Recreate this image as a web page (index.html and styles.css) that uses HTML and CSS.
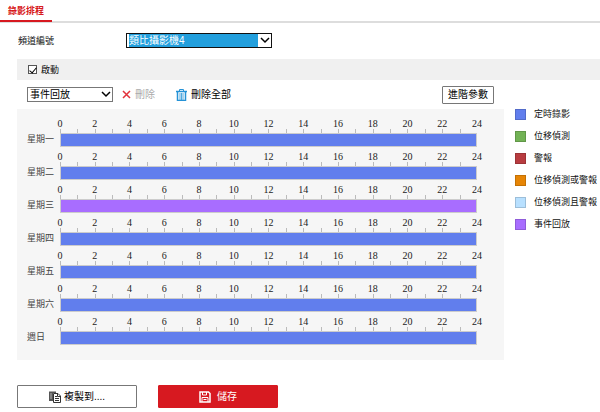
FILE: index.html
```html
<!DOCTYPE html>
<html lang="zh-Hant">
<head>
  <meta charset="UTF-8">
  <meta name="viewport" content="width=device-width, initial-scale=1.0">
  <title>錄影排程</title>
  <link rel="stylesheet" href="styles.css">
</head>
<body>
  <nav class="tabs">
    <a href="#schedule" class="tab active">錄影排程</a>
  </nav>

  <form class="page" id="schedule">
    <div class="channel-row">
      <label class="channel-label" for="channel">頻道編號</label>
      <div class="select-box channel-box">
        <select class="select channel-select" id="channel">
          <option>類比攝影機4</option>
        </select>
        <svg class="arrow" viewBox="0 0 10 7"><path d="M1 1l4 4 4-4"/></svg>
      </div>
    </div>

    <div class="enable-bar">
      <input type="checkbox" class="check" id="enable" checked>
      <label for="enable">啟動</label>
    </div>

    <div class="content">
      <div class="main">
        <div class="toolbar">
          <div class="select-box type-box">
            <select class="select" id="record-type" aria-label="事件回放">
              <option>事件回放</option>
            </select>
            <svg class="arrow" viewBox="0 0 10 7"><path d="M1 1l4 4 4-4"/></svg>
          </div>
          <button type="button" class="tool delete" disabled>
            <svg class="icon-x" viewBox="0 0 9 9"><path d="M1 1l7 7M8 1l-7 7"/></svg>
            刪除
          </button>
          <button type="button" class="tool delete-all">
            <svg class="icon-trash" viewBox="0 0 11 12"><path d="M3.5 2V.5h4V2"/><path d="M0 2.5h11" stroke-width="1.5"/><path d="M1.5 3v8.5h8V3" stroke-width="1.5"/><path d="M4 4v7M5.5 4v7M7 4v7" stroke-width=".8"/></svg>
            刪除全部
          </button>
          <button type="button" class="advanced">進階參數</button>
        </div>
        <div class="schedule" id="days"></div>
      </div>

      <ul class="legend">
        <li><span class="swatch timing"></span>定時錄影</li>
        <li><span class="swatch motion"></span>位移偵測</li>
        <li><span class="swatch alarm"></span>警報</li>
        <li><span class="swatch motion-or-alarm"></span>位移偵測或警報</li>
        <li><span class="swatch motion-and-alarm"></span>位移偵測且警報</li>
        <li><span class="swatch event"></span>事件回放</li>
      </ul>
    </div>

    <div class="actions">
      <button type="button" class="btn copy">
        <svg class="icon" viewBox="0 0 12 12"><path d="M0 .5h7v1.500H4v8H0z" fill="#555"/><path d="M1 3h2M1 5h2M1 7h2" stroke="#ccc" stroke-width=".8"/><path d="M4.500 2.500H9L11.500 5v6.500h-7z" fill="#fff" stroke="#333"/><path d="M8.500 2.500v3h3M6 5.500h2M6 7.500h4M6 9.500h4" fill="none" stroke="#333"/></svg>
        複製到....
      </button>
      <button type="submit" class="btn save">
        <svg class="icon" viewBox="0 0 12 12"><path d="M1 1h8.500L11 2.500V11H1z" fill="none" stroke="#fff" stroke-width="1.500"/><path d="M3.500 1v3h4V1M3 11V6.500h6V11" fill="none" stroke="#fff"/><path d="M4.500 8.500h3" stroke="#fff"/></svg>
        儲存
      </button>
    </div>
  </form>

  <script src="script.js"></script>
</body>
</html>
```
FILE: styles.css
```css
:root {
  --red: #d71920;
  --timing: #617eed;
  --timing-edge: #4563e4;
  --event: #a86dff;
  --event-edge: #9254ef;
  --border: #777;
}

* {
  margin: 0;
  padding: 0;
  box-sizing: border-box;
}

body {
  font-family: "Liberation Sans", "Noto Sans CJK TC", sans-serif;
  font-size: 9px;
  line-height: 12px;
  color: #111;
  background: #fff;
}

button,
select {
  font-family: inherit;
  font-size: 10px;
  line-height: 12px;
  color: #000;
}

svg {
  display: block;
  flex: none;
}

.tabs {
  display: flex;
  height: 23px;
  background: linear-gradient(#ddd, #ddd) 0 21px / 100% 2px no-repeat;
}

.tab {
  padding: 5px 8px 0;
  height: 22px;
  color: var(--red);
  font-weight: bold;
  text-decoration: none;
  border-bottom: 2px solid var(--red);
}

.page {
  padding-left: 17px;
}

.channel-row {
  display: flex;
  align-items: center;
  padding: 10px 0 11px 1px;
}

.channel-label {
  width: 108px;
}

.select-box {
  position: relative;
}

.select {
  appearance: none;
  display: block;
  width: 100%;
  height: 15px;
  padding: 0 16px 0 2px;
  border: 1px solid var(--border);
  border-radius: 0;
  background: #fff;
}

.channel-box {
  width: 146px;
}

.channel-select {
  padding: 0 13px 0 2px;
  border-color: #111;
  color: #fff;
  background: #229fdd content-box;
}

.channel-select option {
  color: #000;
}

.arrow {
  position: absolute;
  top: 4px;
  right: 2px;
  width: 10px;
  height: 7px;
  fill: none;
  stroke: #000;
  stroke-width: 1.5;
  pointer-events: none;
}

.enable-bar {
  display: flex;
  align-items: center;
  gap: 4px;
  height: 21px;
  padding-left: 11px;
  background: #f0f0f0;
}

.check {
  appearance: none;
  display: grid;
  place-items: center;
  width: 9px;
  height: 9px;
  border: 1px solid #555;
  background: #fff;
}

.check:checked::before {
  content: "";
  width: 3px;
  height: 6px;
  border: solid #000;
  border-width: 0 1px 1px 0;
  transform: rotate(40deg);
}

.content {
  display: flex;
  gap: 11px;
}

.main {
  flex: 1;
}

.toolbar {
  display: flex;
  align-items: center;
  height: 29px;
  padding: 0 10px;
}

.type-box {
  width: 86px;
}

.tool {
  display: flex;
  align-items: center;
  gap: 4px;
  border: 0;
  background: none;
}

.delete {
  margin-left: 9px;
  color: #aaa;
}

.delete-all {
  margin-left: 21px;
}

.icon-x {
  width: 9px;
  height: 9px;
  stroke: #e2323b;
  stroke-width: 1.5;
}

.icon-trash {
  width: 11px;
  height: 12px;
  fill: none;
  stroke: #2592d6;
}

.advanced {
  width: 52px;
  height: 18px;
  margin-left: auto;
  border: 1px solid var(--border);
  border-radius: 1px;
  background: #fff;
}

.schedule {
  padding: 9px 27px 15px 10px;
  background: #f6f6f6;
}

.day {
  display: flex;
  align-items: flex-end;
  margin-bottom: 4px;
}

.day:last-child {
  margin-bottom: 0;
}

.day-name {
  width: 33px;
  padding-bottom: 2px;
  color: #444;
}

.timeline {
  flex: 1;
}

.hours {
  display: flex;
  justify-content: space-between;
  height: 15px;
  font-family: "Liberation Serif", serif;
  font-size: 10px;
  color: #222;
  background: repeating-linear-gradient(90deg, #bbb 0 1px, transparent 1px calc(100% / 24)) 0 100% / 100% 4px no-repeat;
}

.hour {
  display: flex;
  justify-content: center;
  width: 0;
}

.bar {
  height: 14px;
  border: 1px solid var(--timing-edge);
  outline: 1px solid #ccc;
  outline-offset: -1px;
  background: var(--timing);
}

.bar.event {
  border-color: var(--event-edge);
  background: var(--event);
}

.legend {
  width: 85px;
  padding-top: 23px;
  list-style: none;
}

.legend li {
  display: flex;
  align-items: center;
  gap: 8px;
  height: 22px;
  white-space: nowrap;
}

.swatch {
  width: 11px;
  height: 11px;
  border: 1px solid rgba(0, 0, 0, 0.15);
}

.swatch.timing {
  background: var(--timing);
}

.swatch.motion {
  background: #72b255;
}

.swatch.alarm {
  background: #b83c40;
}

.swatch.motion-or-alarm {
  background: #e68505;
}

.swatch.motion-and-alarm {
  background: #b8e0ff;
}

.swatch.event {
  background: var(--event);
}

.actions {
  display: flex;
  gap: 21px;
  padding-top: 25px;
}

.btn {
  display: flex;
  align-items: center;
  justify-content: center;
  width: 120px;
  height: 23px;
  border: 1px solid var(--border);
  border-radius: 1px;
  background: #fff;
}

.copy {
  gap: 3px;
}

.save {
  gap: 6px;
  color: #fff;
  border-color: var(--red);
  background: var(--red);
}

.icon {
  width: 12px;
  height: 12px;
}
```
FILE: script.js
```js
const days = [
  { name: '星期一', type: 'timing' },
  { name: '星期二', type: 'timing' },
  { name: '星期三', type: 'event' },
  { name: '星期四', type: 'timing' },
  { name: '星期五', type: 'timing' },
  { name: '星期六', type: 'timing' },
  { name: '週日', type: 'timing' }
];

let hours = '';
for (let h = 0; h <= 24; h += 2) {
  hours += `<span class="hour">${h}</span>`;
}

document.getElementById('days').innerHTML = days.map(day => `
  <div class="day">
    <span class="day-name">${day.name}</span>
    <div class="timeline">
      <div class="hours">${hours}</div>
      <div class="bar ${day.type}"></div>
    </div>
  </div>`).join('');
```
